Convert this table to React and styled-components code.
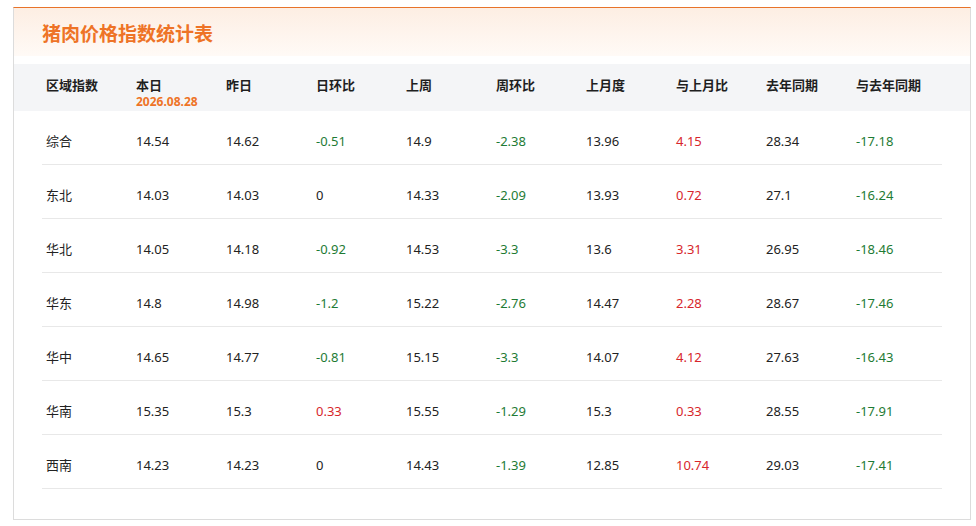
import React from 'react';
import styled, { createGlobalStyle } from 'styled-components';

const GlobalStyle = createGlobalStyle`
    html, body {
        margin: 0;
        padding: 0;
        background: #fff;
        font-family: "Noto Sans", "Noto Sans CJK SC", sans-serif;
    }
`;

const columns = ['区域指数', '本日', '昨日', '日环比', '上周', '周环比', '上月度', '与上月比', '去年同期', '与去年同期'];

// tone: which columns are changes (colored by sign)
const changeCols = [3, 5, 7, 9];

const rows = [
    ['综合', '14.54', '14.62', '-0.51', '14.9', '-2.38', '13.96', '4.15', '28.34', '-17.18'],
    ['东北', '14.03', '14.03', '0', '14.33', '-2.09', '13.93', '0.72', '27.1', '-16.24'],
    ['华北', '14.05', '14.18', '-0.92', '14.53', '-3.3', '13.6', '3.31', '26.95', '-18.46'],
    ['华东', '14.8', '14.98', '-1.2', '15.22', '-2.76', '14.47', '2.28', '28.67', '-17.46'],
    ['华中', '14.65', '14.77', '-0.81', '15.15', '-3.3', '14.07', '4.12', '27.63', '-16.43'],
    ['华南', '15.35', '15.3', '0.33', '15.55', '-1.29', '15.3', '0.33', '28.55', '-17.91'],
    ['西南', '14.23', '14.23', '0', '14.43', '-1.39', '12.85', '10.74', '29.03', '-17.41'],
];

const toneOf = (col, value) => {
    if (!changeCols.includes(col)) return 'plain';
    const n = parseFloat(value);
    if (n > 0) return 'up';
    if (n < 0) return 'down';
    return 'plain';
};

const App = () => {
    return (
        <Page>
            <GlobalStyle />
            <Card>
                <TitleBar>
                    <h2>猪肉价格指数统计表</h2>
                </TitleBar>
                <HeadRow>
                    {columns.map((c, i) => (
                        <HeadCell key={c}>
                            <span>{c}</span>
                            {i === 1 && <DateTag>2026.08.28</DateTag>}
                        </HeadCell>
                    ))}
                </HeadRow>
                <Body>
                    {rows.map((r) => (
                        <Row key={r[0]}>
                            {r.map((v, i) => (
                                <Cell key={i} tone={toneOf(i, v)}>{v}</Cell>
                            ))}
                        </Row>
                    ))}
                </Body>
            </Card>
        </Page>
    );
}

export default App;

const Page = styled.div`
    padding: 7px 5px 6px 13px;
`;

const Card = styled.div`
    width: 958px;
    box-sizing: border-box;
    border: 1px solid #dcdcdc;
    border-top: 1px solid #e8732a;
    background: #fff;
    padding-bottom: 30px;
`;

const TitleBar = styled.div`
    height: 48px;
    display: flex;
    align-items: center;
    padding: 0 28px;
    background: linear-gradient(to bottom, #fdeee3, #fffaf6);
    margin-bottom: 8px;

    h2 {
        margin: 0;
        font-size: 19px;
        font-weight: 700;
        color: #ee7326;
        font-family: "Noto Sans CJK SC", sans-serif;
    }
`;

const HeadRow = styled.div`
    display: grid;
    grid-template-columns: repeat(10, 90px);
    height: 47px;
    padding: 0 28px;
    background: #f4f5f7;
    box-sizing: border-box;
`;

const HeadCell = styled.div`
    display: flex;
    flex-direction: column;
    padding: 12px 4px 0;
    font-size: 13px;
    font-weight: 700;
    line-height: 17px;
    color: #1f1f1f;
    font-family: "Noto Sans CJK SC", sans-serif;
`;

const DateTag = styled.span`
    margin-top: 2px;
    font-size: 12px;
    line-height: 13px;
    font-weight: 700;
    color: #ee7326;
    font-family: "Noto Sans", sans-serif;
`;

const Body = styled.div`
    margin: 0 28px;
`;

const Row = styled.div`
    display: grid;
    grid-template-columns: repeat(10, 90px);
    padding: 20px 0 13px;
    border-bottom: 1px solid #e8e8e8;
`;

const Cell = styled.div`
    padding: 0 4px;
    font-size: 13px;
    line-height: 20px;
    color: ${(p) => (p.tone === 'up' ? '#d7262b' : p.tone === 'down' ? '#1e7b34' : '#222')};
`;
